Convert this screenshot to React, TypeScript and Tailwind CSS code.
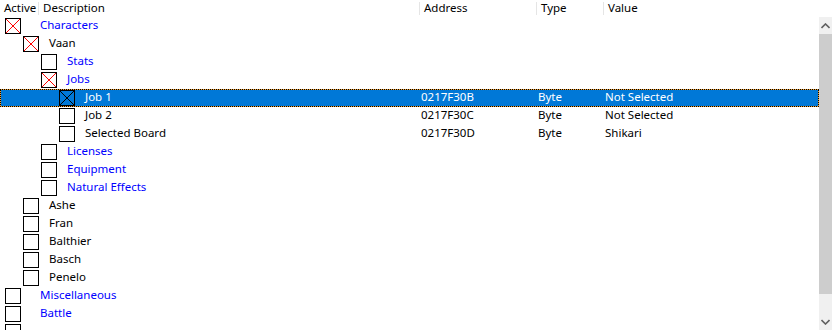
import React from 'react';

interface Entry {
  level: number;
  label: string;
  group?: boolean;
  checked?: boolean;
  selected?: boolean;
  address?: string;
  type?: string;
  value?: string;
}

const entries: Entry[] = [
  { level: 0, label: 'Characters', group: true, checked: true },
  { level: 1, label: 'Vaan', checked: true },
  { level: 2, label: 'Stats', group: true },
  { level: 2, label: 'Jobs', group: true, checked: true },
  { level: 3, label: 'Job 1', selected: true, checked: true, address: '0217F30B', type: 'Byte', value: 'Not Selected' },
  { level: 3, label: 'Job 2', address: '0217F30C', type: 'Byte', value: 'Not Selected' },
  { level: 3, label: 'Selected Board', address: '0217F30D', type: 'Byte', value: 'Shikari' },
  { level: 2, label: 'Licenses', group: true },
  { level: 2, label: 'Equipment', group: true },
  { level: 2, label: 'Natural Effects', group: true },
  { level: 1, label: 'Ashe' },
  { level: 1, label: 'Fran' },
  { level: 1, label: 'Balthier' },
  { level: 1, label: 'Basch' },
  { level: 1, label: 'Penelo' },
  { level: 0, label: 'Miscellaneous', group: true },
  { level: 0, label: 'Battle', group: true },
  { level: 0, label: '' },
];

// indent in px for each tree level
const indent = ['ml-[5px]', 'ml-[23px]', 'ml-[41px]', 'ml-[59px]'];

function CheckBox({ checked, selected }: { checked?: boolean; selected?: boolean }) {
  return (
    <svg width="16" height="16" viewBox="0 0 16 16" className="shrink-0">
      <rect x="0.5" y="0.5" width="15" height="15" fill={selected ? 'none' : '#ffffff'} stroke="#000000" />
      {checked && (
        <path d="M1 1 L15 15 M15 1 L1 15" stroke={selected ? '#000000' : '#ff0000'} strokeWidth="1" shapeRendering="crispEdges" />
      )}
    </svg>
  );
}

function Row({ entry }: { entry: Entry }) {
  const textColor = entry.selected ? 'text-white' : entry.group ? 'text-[#0000ff]' : 'text-black';
  return (
    <div
      className={`flex h-[18px] items-center ${
        entry.selected
          ? 'bg-[#0078d7] border border-[#f0a030] outline outline-1 outline-dotted outline-black -outline-offset-1'
          : ''
      }`}
    >
      <div className={`flex w-[420px] shrink-0 items-center ${entry.selected ? '-ml-px' : ''}`}>
        <div className={indent[entry.level]}>
          <CheckBox checked={entry.checked} selected={entry.selected} />
        </div>
        <span className={`pb-[2px] ${entry.level === 0 ? 'ml-[19px]' : 'ml-[10px]'} ${textColor}`}>{entry.label}</span>
      </div>
      <div className={`w-[117px] shrink-0 pb-[2px] pl-[1px] ${textColor}`}>{entry.address}</div>
      <div className={`w-[67px] shrink-0 pb-[2px] pl-[1px] ${textColor}`}>{entry.type}</div>
      <div className={`flex-1 pb-[2px] pl-[1px] ${textColor}`}>{entry.value}</div>
    </div>
  );
}

export default function App() {
  return (
    <div
      className="h-[330px] w-[832px] overflow-hidden bg-white text-[11.5px] leading-none"
      style={{ fontFamily: '"Noto Sans", "Segoe UI", sans-serif' }}
    >
      {/* column header */}
      <div className="flex h-[17px] items-center text-black">
        <div className="w-[39px] shrink-0 border-r border-[#e5e5e5] pb-[2px] pl-[4px]">Active</div>
        <div className="w-[381px] shrink-0 border-r border-[#e5e5e5] pb-[2px] pl-[4px]">Description</div>
        <div className="w-[117px] shrink-0 border-r border-[#e5e5e5] pb-[2px] pl-[4px]">Address</div>
        <div className="w-[67px] shrink-0 border-r border-[#e5e5e5] pb-[2px] pl-[4px]">Type</div>
        <div className="flex-1 pb-[2px] pl-[4px]">Value</div>
      </div>

      <div className="flex h-[313px]">
        <div className="w-[819px] shrink-0">
          {entries.map((e, i) => (
            <Row key={i} entry={e} />
          ))}
        </div>

        {/* vertical scrollbar */}
        <div className="flex w-[13px] flex-col bg-[#f0f0f0]">
          <div className="flex h-[17px] items-center justify-center">
            <svg width="9" height="6" viewBox="0 0 9 6">
              <path d="M0.5 5 L4.5 1 L8.5 5" fill="none" stroke="#606060" strokeWidth="1.6" />
            </svg>
          </div>
          <div className="h-[260px] bg-[#cdcdcd]" />
          <div className="flex-1" />
          <div className="flex h-[17px] items-center justify-center">
            <svg width="9" height="6" viewBox="0 0 9 6">
              <path d="M0.5 1 L4.5 5 L8.5 1" fill="none" stroke="#606060" strokeWidth="1.6" />
            </svg>
          </div>
        </div>
      </div>
    </div>
  );
}
